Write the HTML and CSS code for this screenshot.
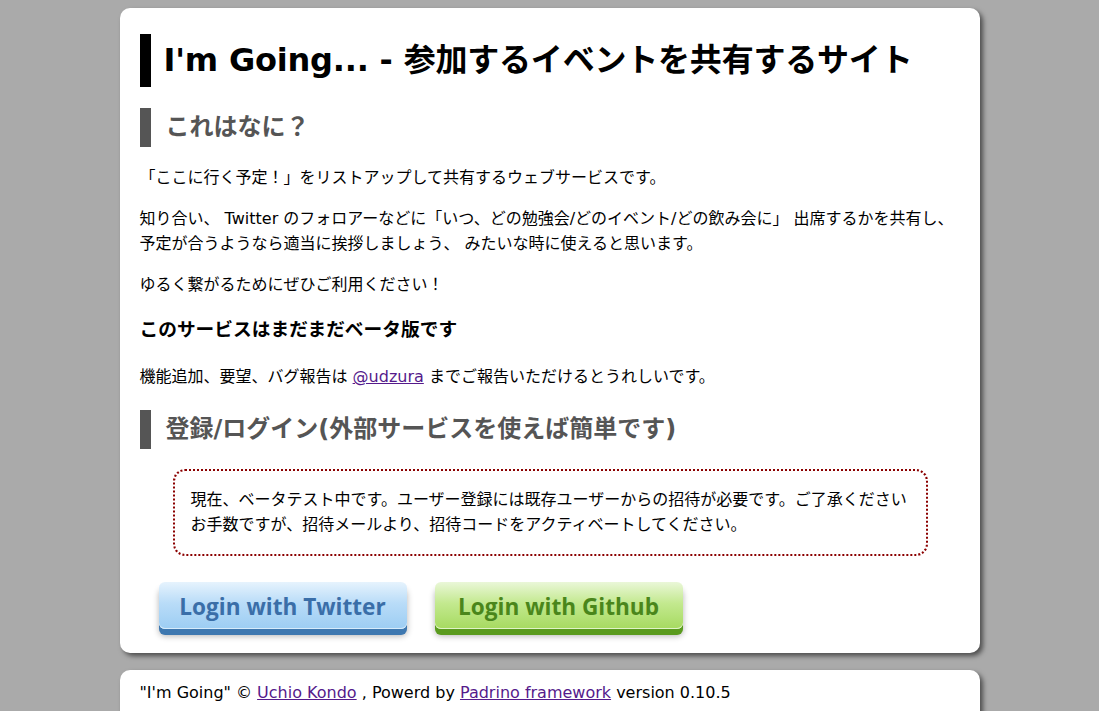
FILE: index.html
```html
<!DOCTYPE html>
<html lang="ja">
<head>
<meta charset="utf-8">
<title>I'm Going</title>
<link rel="stylesheet" href="styles.css">
</head>
<body>
<div class="page">
  <h1 class="title">I'm Going... - 参加するイベントを共有するサイト</h1>
  <h2 class="section">これはなに？</h2>
  <p class="p-first">「ここに行く予定！」をリストアップして共有するウェブサービスです。</p>
  <p>知り合い、 Twitter のフォロアーなどに「いつ、どの勉強会/どのイベント/どの飲み会に」 出席するかを共有し、予定が合うようなら適当に挨拶しましょう、 みたいな時に使えると思います。</p>
  <p>ゆるく繋がるためにぜひご利用ください！</p>
  <h3 class="sub">このサービスはまだまだベータ版です</h3>
  <p class="p-after-h3">機能追加、要望、バグ報告は <a href="#">@udzura</a> までご報告いただけるとうれしいです。</p>
  <h2 class="section">登録/ログイン(外部サービスを使えば簡単です)</h2>
  <div class="notice">
    <p>現在、ベータテスト中です。ユーザー登録には既存ユーザーからの招待が必要です。ご了承ください<br>お手数ですが、招待メールより、招待コードをアクティベートしてください。</p>
  </div>
  <div class="buttons">
    <a class="btn btn-twitter" href="#">Login with Twitter</a>
    <a class="btn btn-github" href="#">Login with Github</a>
  </div>
</div>
<div class="page footer">
  <p>"I'm Going" © <a href="#">Uchio Kondo</a> , Powerd by <a href="#">Padrino framework</a> version 0.10.5</p>
</div>
</body>
</html>
```
FILE: styles.css
```css
html, body {
  margin: 0;
  padding: 0;
}
body {
  background: #aaaaaa;
  font-family: "DejaVu Sans", "Noto Sans CJK JP", sans-serif;
  font-size: 16px;
  color: #000;
  padding-top: 8px;
}
.page {
  width: 820px;
  margin: 0 auto;
  background: #fff;
  border-radius: 10px;
  box-shadow: 3px 3px 5px rgba(0, 0, 0, 0.55);
  padding: 26px 20px 24px 20px;
}
.title {
  margin: 0;
  border-left: 11px solid #000;
  padding-left: 13px;
  font-size: 32px;
  line-height: 53px;
  font-weight: bold;
  letter-spacing: -0.2px;
}
.section {
  margin: 21px 0 0 0;
  border-left: 11px solid #555;
  padding-left: 15px;
  font-size: 24px;
  line-height: 39px;
  color: #555;
  font-weight: bold;
}
p {
  margin: 16px 0 0 0;
  line-height: 25px;
}
.p-first {
  margin-top: 18px;
}
.sub {
  margin: 20px 0 0 0;
  font-size: 18.72px;
  line-height: 25px;
  font-weight: bold;
}
.p-after-h3 {
  margin-top: 22px;
}
a {
  color: #551a8b;
}
.notice {
  margin: 20px 32px 0 33px;
  border: 2px dotted #8b0000;
  border-radius: 12px;
  padding: 16px 16px 17px 16px;
}
.notice p {
  margin: 0;
}
.buttons {
  display: flex;
  gap: 28px;
  margin: 26px 0 0 19px;
}
.btn {
  display: block;
  width: 248px;
  height: 47px;
  line-height: 50px;
  text-align: center;
  font-family: "Open Sans", "DejaVu Sans", sans-serif;
  font-weight: bold;
  font-size: 22.6px;
  text-decoration: none;
  border-radius: 6px;
}
.btn-twitter {
  color: #3a6ea8;
  background: linear-gradient(#e6f3fd 0%, #b9dcf8 45%, #9ccdf3 100%);
  box-shadow: 0 -1px 0 #d6ebfb inset, 0 6px 0 #3e78b0, 0 7px 6px rgba(0, 0, 0, 0.3);
}
.btn-github {
  color: #4a861b;
  background: linear-gradient(#eaf7d8 0%, #c3e98f 45%, #a6da60 100%);
  box-shadow: 0 -1px 0 #e0f3c6 inset, 0 6px 0 #5a9b1e, 0 7px 6px rgba(0, 0, 0, 0.3);
}
.footer {
  margin-top: 17px;
  padding: 10px 20px 20px 20px;
  border-radius: 10px 10px 0 0;
}
.footer p {
  margin: 0;
}
```
